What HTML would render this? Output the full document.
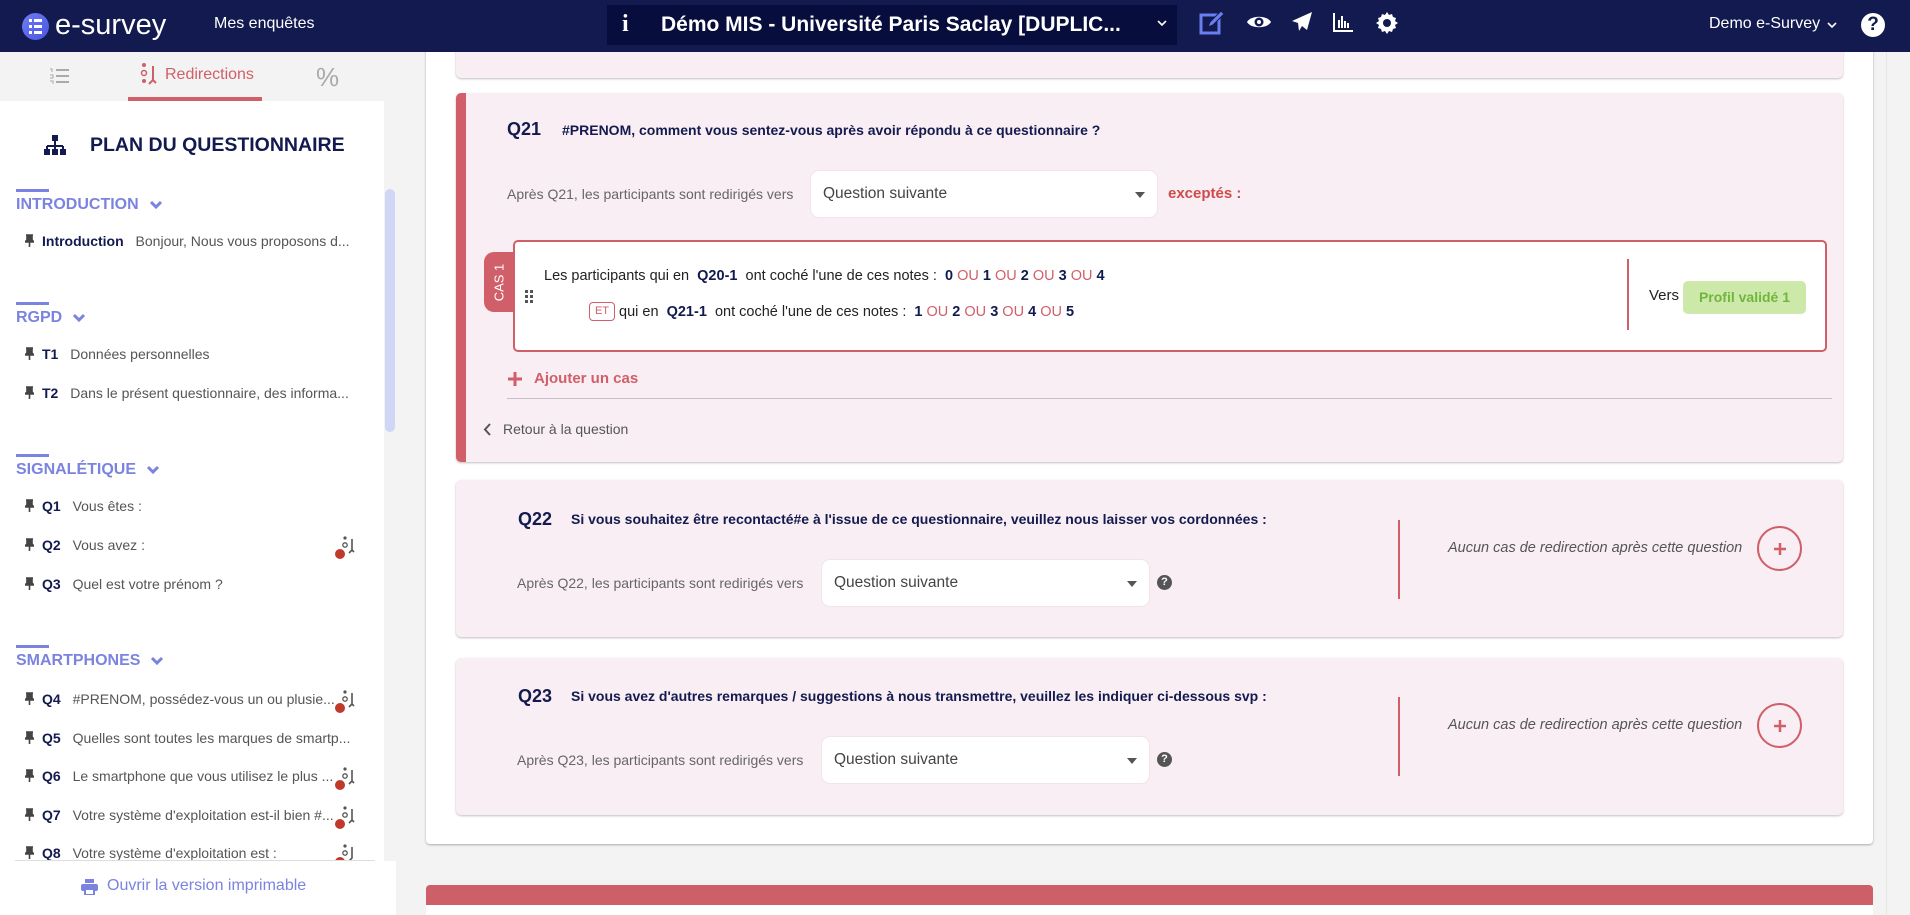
<!DOCTYPE html>
<html><head><meta charset="utf-8">
<style>
*{box-sizing:border-box;margin:0;padding:0}
body{width:1910px;height:915px;overflow:hidden;position:relative;background:#f3f3f3;font-family:"Liberation Sans",Arial,sans-serif;color:#121a4f}
.a{position:absolute;white-space:nowrap}
.hdr{left:0;top:0;width:1910px;height:52px;background:#121a4f}
.side{left:0;top:52px;width:396px;height:863px;background:#fff}
.tabs{left:0;top:52px;width:396px;height:49px;background:#f3f3f3}
.sec-bar{position:absolute;left:16px;width:33px;height:3px;background:#7b83e0}
.sec{position:absolute;left:16px;font-size:16px;font-weight:bold;color:#7b83e0}
.sec svg{vertical-align:middle;margin-left:10px}
.it{position:absolute;left:25px;font-size:14px;color:#555;white-space:nowrap}
.it b{color:#121a4f;margin:0 8px 0 8px}
.pin{display:inline-block;width:9px;height:13px;vertical-align:-1px;color:#444}
.card{position:absolute;background:#f9eef3;border-radius:5px;box-shadow:0 1px 2px rgba(0,0,0,.25)}
.sel{position:absolute;background:#fff;border-radius:9px;border:1px solid #f0e4ea;font-size:15.5px;color:#444;padding-left:12px}
.sel:after{content:"";position:absolute;right:12px;top:50%;margin-top:-2px;border-left:5px solid transparent;border-right:5px solid transparent;border-top:6px solid #555}
.lbl{font-size:14px;color:#666}
.ql{font-size:18px;font-weight:bold}
.qt{font-size:14px;font-weight:bold}
.r{color:#d05f69}
.n{color:#121a4f;font-weight:bold}
</style></head><body>
<!-- main -->
<div class="a" style="left:426px;top:0;width:1447px;height:844px;background:#fff;border-radius:0 0 4px 4px;box-shadow:0 1px 2px rgba(0,0,0,.3)"></div>
<div class="a" style="left:426px;top:885px;width:1447px;height:30px;background:#fff;border-top:20px solid #cd5f69;border-radius:4px 4px 0 0"></div>
<div class="a" style="left:1886px;top:52px;width:24px;height:863px;background:#f3f3f3;border-left:1px solid #e6e6e6"></div>
<div class="card" style="left:456px;top:40px;width:1387px;height:38px"></div>

<div class="a hdr"></div>
<!-- logo -->
<div class="a" style="left:22px;top:13px;width:27px;height:27px;border-radius:50%;background:linear-gradient(135deg,#6f7cf5,#4a55e0)"></div>
<div class="a" style="left:29px;top:19px;width:3px;height:3px;background:#fff;box-shadow:0 6px #fff,0 12px #fff"></div>
<div class="a" style="left:34px;top:19px;width:8px;height:3px;background:#fff;box-shadow:0 6px #fff,0 12px #fff"></div>
<div class="a" style="left:55px;top:9px;font-size:29px;color:#fff">e-survey</div>
<div class="a" style="left:214px;top:15px;font-size:16px;color:#fff">Mes enquêtes</div>
<div class="a" style="left:607px;top:5px;width:570px;height:40px;background:#070d3c"></div>
<div class="a" style="left:622px;top:11px;font-size:24px;font-weight:bold;color:#fff;font-family:'Liberation Serif',serif">i</div>
<div class="a" style="left:661px;top:13px;font-size:21px;font-weight:bold;color:#fff">Démo MIS - Université Paris Saclay [DUPLIC...</div>
<svg class="a" style="left:1156px;top:18px" width="12" height="10"><path d="M2 3l4 4 4-4" stroke="#fff" stroke-width="1.6" fill="none"/></svg>
<svg class="a" style="left:1198px;top:9px" width="28" height="28"><rect x="3" y="6" width="18" height="18" fill="none" stroke="#6b7ef0" stroke-width="3"/><path d="M10 18l2-5 11-11 3 3-11 11z" fill="#6b7ef0" stroke="#121a4f" stroke-width="1"/></svg>
<svg class="a" style="left:1246px;top:12px" width="26" height="20"><path d="M1 10C5 3 21 3 25 10 21 17 5 17 1 10z" fill="#fff"/><circle cx="13" cy="10" r="4.5" fill="#121a4f"/><circle cx="13" cy="10" r="2" fill="#fff"/></svg>
<svg class="a" style="left:1291px;top:11px" width="22" height="22"><path d="M21 1L1 10l6 2 1 8 3-5 5 4z" fill="#fff"/></svg>
<svg class="a" style="left:1332px;top:11px" width="22" height="22"><path d="M2 2v18h19" stroke="#fff" stroke-width="2" fill="none"/><path d="M7 17V9M10 17V5M13 17V10M16 17V12" stroke="#fff" stroke-width="2"/></svg>
<svg class="a" style="left:1375px;top:11px" width="24" height="24" viewBox="0 0 24 24"><path d="M12 1l2 3 3-1 1 3 3 1-1 3 3 2-3 2 1 3-3 1-1 3-3-1-2 3-2-3-3 1-1-3-3-1 1-3-3-2 3-2-1-3 3-1 1-3 3 1z" fill="#fff"/><circle cx="12" cy="12" r="4" fill="#121a4f"/></svg>
<div class="a" style="left:1709px;top:15px;font-size:16px;color:#fff">Demo e-Survey</div>
<svg class="a" style="left:1826px;top:21px" width="12" height="9"><path d="M2 2l4 4 4-4" stroke="#fff" stroke-width="1.6" fill="none"/></svg>
<div class="a" style="left:1861px;top:13px;width:24px;height:24px;border-radius:50%;background:#fff;color:#121a4f;font-weight:bold;font-size:19px;text-align:center;line-height:24px">?</div>

<!-- sidebar -->
<div class="a side"></div>
<div class="a tabs"></div>
<svg class="a" style="left:48px;top:66px" width="22" height="20"><path d="M8 4h13M8 10h13M8 16h13" stroke="#aaa" stroke-width="2"/><path d="M2 3h2v3M2 9h3v3H2M2 15h3v3" stroke="#aaa" stroke-width="1" fill="none"/></svg>
<svg class="a" style="left:140px;top:62px" width="20" height="26"><circle cx="4" cy="3" r="2" fill="#d05f69"/><circle cx="4" cy="11" r="2.5" fill="none" stroke="#d05f69" stroke-width="1.5"/><circle cx="4" cy="19" r="2" fill="#d05f69"/><path d="M13 4v14l-4 4M13 18l3 3" stroke="#d05f69" stroke-width="2" fill="none"/></svg>
<div class="a" style="left:165px;top:66px;font-size:16px;color:#d05f69">Redirections</div>
<div class="a" style="left:128px;top:97px;width:134px;height:4px;background:#d05f69"></div>
<div class="a" style="left:316px;top:62px;font-size:26px;color:#aaa">%</div>
<svg class="a" style="left:44px;top:134px" width="22" height="22"><rect x="8" y="1" width="6" height="6" fill="#121a4f"/><path d="M11 7v5M3 12h16M3 12v4M11 12v4M19 12v4" stroke="#121a4f" stroke-width="2" fill="none"/><rect x="0" y="15" width="6" height="6" fill="#121a4f"/><rect x="8" y="15" width="6" height="6" fill="#121a4f"/><rect x="16" y="15" width="6" height="6" fill="#121a4f"/></svg>
<div class="a" style="left:90px;top:134px;font-size:19.5px;font-weight:bold;color:#121a4f">PLAN DU QUESTIONNAIRE</div>
<div class="a" style="left:384px;top:101px;width:12px;height:760px;background:#f3f3f3"></div>
<div class="a" style="left:385px;top:189px;width:10px;height:243px;background:#d0d6f5;border-radius:5px"></div>

<div class="sec-bar" style="top:189px"></div>
<div class="sec" style="top:196px">INTRODUCTION<svg width="14" height="10"><path d="M2 2l5 5 5-5" stroke="#7b83e0" stroke-width="3" fill="none"/></svg></div>
<div class="it" style="top:233px"><svg class="pin" viewBox="0 0 9 13"><path d="M1 1h7M2 1v5L0 8h9L7 6V1M4.5 8v5" stroke="#444" stroke-width="1.6" fill="#444"/></svg><b>Introduction</b> Bonjour, Nous vous proposons d...</div>

<div class="sec-bar" style="top:302px"></div>
<div class="sec" style="top:309px">RGPD<svg width="14" height="10"><path d="M2 2l5 5 5-5" stroke="#7b83e0" stroke-width="3" fill="none"/></svg></div>
<div class="it" style="top:346px"><svg class="pin" viewBox="0 0 9 13"><path d="M1 1h7M2 1v5L0 8h9L7 6V1M4.5 8v5" stroke="#444" stroke-width="1.6" fill="#444"/></svg><b>T1</b> Données personnelles</div>
<div class="it" style="top:385px"><svg class="pin" viewBox="0 0 9 13"><path d="M1 1h7M2 1v5L0 8h9L7 6V1M4.5 8v5" stroke="#444" stroke-width="1.6" fill="#444"/></svg><b>T2</b> Dans le présent questionnaire, des informa...</div>

<div class="sec-bar" style="top:454px"></div>
<div class="sec" style="top:461px">SIGNALÉTIQUE<svg width="14" height="10"><path d="M2 2l5 5 5-5" stroke="#7b83e0" stroke-width="3" fill="none"/></svg></div>
<div class="it" style="top:498px"><svg class="pin" viewBox="0 0 9 13"><path d="M1 1h7M2 1v5L0 8h9L7 6V1M4.5 8v5" stroke="#444" stroke-width="1.6" fill="#444"/></svg><b>Q1</b> Vous êtes :</div>
<div class="it" style="top:537px"><svg class="pin" viewBox="0 0 9 13"><path d="M1 1h7M2 1v5L0 8h9L7 6V1M4.5 8v5" stroke="#444" stroke-width="1.6" fill="#444"/></svg><b>Q2</b> Vous avez :</div>
<div class="it" style="top:576px"><svg class="pin" viewBox="0 0 9 13"><path d="M1 1h7M2 1v5L0 8h9L7 6V1M4.5 8v5" stroke="#444" stroke-width="1.6" fill="#444"/></svg><b>Q3</b> Quel est votre prénom ?</div>

<div class="sec-bar" style="top:645px"></div>
<div class="sec" style="top:652px">SMARTPHONES<svg width="14" height="10"><path d="M2 2l5 5 5-5" stroke="#7b83e0" stroke-width="3" fill="none"/></svg></div>
<div class="it" style="top:691px"><svg class="pin" viewBox="0 0 9 13"><path d="M1 1h7M2 1v5L0 8h9L7 6V1M4.5 8v5" stroke="#444" stroke-width="1.6" fill="#444"/></svg><b>Q4</b> #PRENOM, possédez-vous un ou plusie...</div>
<div class="it" style="top:730px"><svg class="pin" viewBox="0 0 9 13"><path d="M1 1h7M2 1v5L0 8h9L7 6V1M4.5 8v5" stroke="#444" stroke-width="1.6" fill="#444"/></svg><b>Q5</b> Quelles sont toutes les marques de smartp...</div>
<div class="it" style="top:768px"><svg class="pin" viewBox="0 0 9 13"><path d="M1 1h7M2 1v5L0 8h9L7 6V1M4.5 8v5" stroke="#444" stroke-width="1.6" fill="#444"/></svg><b>Q6</b> Le smartphone que vous utilisez le plus ...</div>
<div class="it" style="top:807px"><svg class="pin" viewBox="0 0 9 13"><path d="M1 1h7M2 1v5L0 8h9L7 6V1M4.5 8v5" stroke="#444" stroke-width="1.6" fill="#444"/></svg><b>Q7</b> Votre système d'exploitation est-il bien #...</div>
<div class="a" style="left:0;top:840px;width:384px;height:20px;overflow:hidden"><div class="it" style="top:5px"><svg class="pin" viewBox="0 0 9 13"><path d="M1 1h7M2 1v5L0 8h9L7 6V1M4.5 8v5" stroke="#444" stroke-width="1.6" fill="#444"/></svg><b>Q8</b> Votre système d'exploitation est :</div></div>
<!-- redirect badges -->
<svg class="a" style="left:334px;top:535px" width="24" height="26"><circle cx="11" cy="3" r="1.6" fill="#555"/><circle cx="11" cy="10" r="2.2" fill="none" stroke="#555" stroke-width="1.3"/><path d="M18 4v11l-3 3M18 15l2 2" stroke="#555" stroke-width="1.6" fill="none"/><circle cx="6" cy="19" r="5" fill="#c0392b"/></svg>
<svg class="a" style="left:334px;top:689px" width="24" height="26"><circle cx="11" cy="3" r="1.6" fill="#555"/><circle cx="11" cy="10" r="2.2" fill="none" stroke="#555" stroke-width="1.3"/><path d="M18 4v11l-3 3M18 15l2 2" stroke="#555" stroke-width="1.6" fill="none"/><circle cx="6" cy="19" r="5" fill="#c0392b"/></svg>
<svg class="a" style="left:334px;top:766px" width="24" height="26"><circle cx="11" cy="3" r="1.6" fill="#555"/><circle cx="11" cy="10" r="2.2" fill="none" stroke="#555" stroke-width="1.3"/><path d="M18 4v11l-3 3M18 15l2 2" stroke="#555" stroke-width="1.6" fill="none"/><circle cx="6" cy="19" r="5" fill="#c0392b"/></svg>
<svg class="a" style="left:334px;top:805px" width="24" height="26"><circle cx="11" cy="3" r="1.6" fill="#555"/><circle cx="11" cy="10" r="2.2" fill="none" stroke="#555" stroke-width="1.3"/><path d="M18 4v11l-3 3M18 15l2 2" stroke="#555" stroke-width="1.6" fill="none"/><circle cx="6" cy="19" r="5" fill="#c0392b"/></svg>
<svg class="a" style="left:334px;top:843px" width="24" height="17"><circle cx="11" cy="3" r="1.6" fill="#555"/><circle cx="11" cy="10" r="2.2" fill="none" stroke="#555" stroke-width="1.3"/><path d="M18 4v11l-3 3" stroke="#555" stroke-width="1.6" fill="none"/><circle cx="6" cy="19" r="5" fill="#c0392b"/></svg>
<div class="a" style="left:15px;top:860px;width:360px;height:1px;background:#ddd"></div>
<svg class="a" style="left:81px;top:879px" width="17" height="16"><rect x="4" y="0" width="9" height="4" fill="#7b83e0"/><rect x="0" y="5" width="17" height="7" rx="2" fill="#7b83e0"/><rect x="4" y="10" width="9" height="6" fill="#fff" stroke="#7b83e0" stroke-width="2"/></svg>
<div class="a" style="left:107px;top:877px;font-size:16px;color:#7b83e0">Ouvrir la version imprimable</div>

<!-- Q21 -->
<div class="card" style="left:456px;top:93px;width:1387px;height:369px;border-left:10px solid #d05f69"></div>
<div class="a ql" style="left:507px;top:119px">Q21</div>
<div class="a qt" style="left:562px;top:122px">#PRENOM, comment vous sentez-vous après avoir répondu à ce questionnaire ?</div>
<div class="a lbl" style="left:507px;top:186px">Après Q21, les participants sont redirigés vers</div>
<div class="sel" style="left:810px;top:170px;width:348px;height:48px;line-height:46px">Question suivante</div>
<div class="a" style="left:1168px;top:185px;font-size:15px;font-weight:bold;color:#cf4a4a">exceptés :</div>
<div class="a" style="left:513px;top:240px;width:1314px;height:112px;background:#fff;border:2px solid #d05f69;border-radius:5px"></div>
<div class="a" style="left:484px;top:252px;width:30px;height:60px;background:#d05f69;border-radius:10px 0 0 10px"></div>
<div class="a" style="left:484px;top:252px;width:30px;height:60px;color:#fff;font-size:13px;display:flex;align-items:center;justify-content:center"><span style="transform:rotate(-90deg);display:block">CAS 1</span></div>
<svg class="a" style="left:525px;top:290px" width="9" height="14"><g fill="#555"><rect x="0" y="0" width="3" height="3"/><rect x="5" y="0" width="3" height="3"/><rect x="0" y="5" width="3" height="3"/><rect x="5" y="5" width="3" height="3"/><rect x="0" y="10" width="3" height="3"/><rect x="5" y="10" width="3" height="3"/></g></svg>
<div class="a" style="left:544px;top:268px;font-size:14.5px;color:#222">Les participants qui en &nbsp;<span class="n">Q20-1</span>&nbsp; ont coché l'une de ces notes : &nbsp;<span class="n">0</span> <span class="r">OU</span> <span class="n">1</span> <span class="r">OU</span> <span class="n">2</span> <span class="r">OU</span> <span class="n">3</span> <span class="r">OU</span> <span class="n">4</span></div>
<div class="a" style="left:589px;top:302px;width:26px;height:19px;border:1px solid #d05f69;border-radius:4px;font-size:11px;color:#d05f69;text-align:center;line-height:17px">ET</div>
<div class="a" style="left:619px;top:304px;font-size:14.5px;color:#222">qui en &nbsp;<span class="n">Q21-1</span>&nbsp; ont coché l'une de ces notes : &nbsp;<span class="n">1</span> <span class="r">OU</span> <span class="n">2</span> <span class="r">OU</span> <span class="n">3</span> <span class="r">OU</span> <span class="n">4</span> <span class="r">OU</span> <span class="n">5</span></div>
<div class="a" style="left:1627px;top:259px;width:2px;height:71px;background:#d05f69"></div>
<div class="a" style="left:1649px;top:287px;font-size:15px;color:#222">Vers</div>
<div class="a" style="left:1683px;top:281px;width:123px;height:33px;background:#cce9aa;border-radius:5px;color:#72b53e;font-weight:bold;font-size:14px;text-align:center;line-height:33px">Profil validé 1</div>
<svg class="a" style="left:507px;top:371px" width="16" height="16"><path d="M8 1v14M1 8h14" stroke="#d05f69" stroke-width="3"/></svg>
<div class="a" style="left:534px;top:370px;font-size:15px;font-weight:bold;color:#d05f69">Ajouter un cas</div>
<div class="a" style="left:507px;top:398px;width:1325px;height:1px;background:#c8c0c6"></div>
<svg class="a" style="left:482px;top:422px" width="10" height="15"><path d="M8 2L3 7.5 8 13" stroke="#555" stroke-width="2" fill="none"/></svg>
<div class="a lbl" style="left:503px;top:421px;color:#555">Retour à la question</div>

<!-- Q22 -->
<div class="card" style="left:456px;top:480px;width:1387px;height:157px"></div>
<div class="a ql" style="left:518px;top:509px">Q22</div>
<div class="a qt" style="left:571px;top:511px">Si vous souhaitez être recontacté#e à l'issue de ce questionnaire, veuillez nous laisser vos cordonnées :</div>
<div class="a lbl" style="left:517px;top:575px">Après Q22, les participants sont redirigés vers</div>
<div class="sel" style="left:821px;top:559px;width:329px;height:48px;line-height:46px">Question suivante</div>
<div class="a" style="left:1157px;top:575px;width:15px;height:15px;border-radius:50%;background:#555;color:#fff;font-size:11px;font-weight:bold;text-align:center;line-height:15px">?</div>
<div class="a" style="left:1398px;top:520px;width:2px;height:79px;background:#d05f69"></div>
<div class="a" style="left:1448px;top:540px;font-size:14.5px;font-style:italic;color:#555">Aucun cas de redirection après cette question</div>
<div class="a" style="left:1757px;top:526px;width:45px;height:45px;border:2px solid #d05f69;border-radius:50%"></div>
<svg class="a" style="left:1772px;top:541px" width="16" height="16"><path d="M8 2v12M2 8h12" stroke="#d05f69" stroke-width="2.5"/></svg>

<!-- Q23 -->
<div class="card" style="left:456px;top:658px;width:1387px;height:157px"></div>
<div class="a ql" style="left:518px;top:686px">Q23</div>
<div class="a qt" style="left:571px;top:688px">Si vous avez d'autres remarques / suggestions à nous transmettre, veuillez les indiquer ci-dessous svp :</div>
<div class="a lbl" style="left:517px;top:752px">Après Q23, les participants sont redirigés vers</div>
<div class="sel" style="left:821px;top:736px;width:329px;height:48px;line-height:46px">Question suivante</div>
<div class="a" style="left:1157px;top:752px;width:15px;height:15px;border-radius:50%;background:#555;color:#fff;font-size:11px;font-weight:bold;text-align:center;line-height:15px">?</div>
<div class="a" style="left:1398px;top:697px;width:2px;height:79px;background:#d05f69"></div>
<div class="a" style="left:1448px;top:717px;font-size:14.5px;font-style:italic;color:#555">Aucun cas de redirection après cette question</div>
<div class="a" style="left:1757px;top:703px;width:45px;height:45px;border:2px solid #d05f69;border-radius:50%"></div>
<svg class="a" style="left:1772px;top:718px" width="16" height="16"><path d="M8 2v12M2 8h12" stroke="#d05f69" stroke-width="2.5"/></svg>
</body></html>
